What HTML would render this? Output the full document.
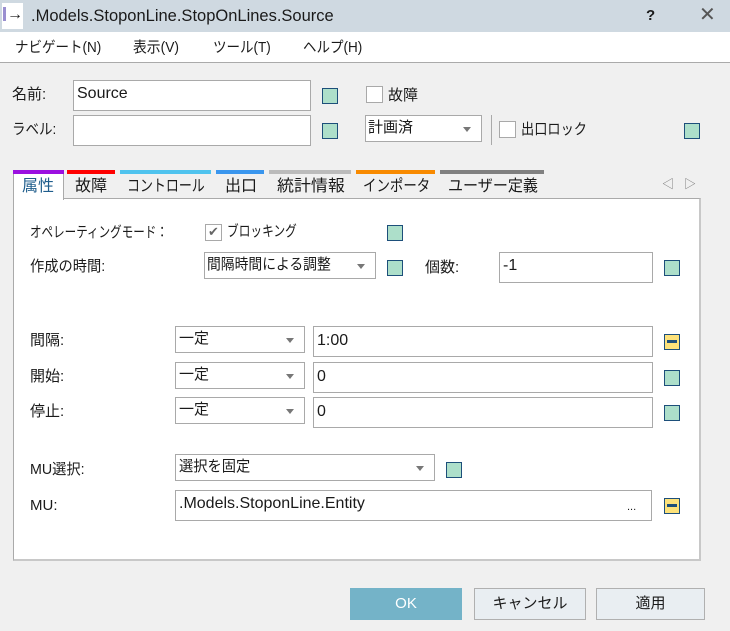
<!DOCTYPE html>
<html><head><meta charset="utf-8"><style>
*{box-sizing:border-box;margin:0;padding:0}
body{width:730px;height:631px;background:#f0f0f0;position:relative;overflow:hidden;font-family:"Liberation Sans","Noto Sans CJK JP",sans-serif;font-size:15px;color:#1a1a1a}
.a{position:absolute;white-space:nowrap}
.t{position:absolute;white-space:nowrap;line-height:20px;transform-origin:left center}
.in{position:absolute;background:#fff;border:1px solid #a9a9a9}
.sq{position:absolute;width:16px;height:16px;background:#addfca;border:1.5px solid #1d4f7a}
.ye{position:absolute;width:16px;height:16px;background:#fde27a;border:1.5px solid #1d4f7a}
.ye:after{content:"";position:absolute;left:2px;right:2px;top:5px;height:3px;background:#1d4f7a}
.cb{position:absolute;width:17px;height:17px;background:#fff;border:1px solid #a9a9a9}
.dd:after{content:"";position:absolute;right:10px;top:11px;border:4px solid transparent;border-top:5px solid #777}
.bar{position:absolute;top:170px;height:4px}
.tab{position:absolute;top:176px;line-height:22px;font-size:16px;white-space:nowrap;transform-origin:left center}
.btn{position:absolute;top:588px;height:32px;border:1px solid #b0b0b0;background:#e9eef2;text-align:center;line-height:30px;font-size:15px}
.L{font-size:16px}
</style></head><body>
<div class="a" style="left:0;top:0;width:730px;height:32px;background:#cfd9e1"></div>
<div class="a" style="left:2px;top:3px;width:21px;height:26px;background:#fff"></div>
<div class="a" style="left:3px;top:7px;width:3px;height:14px;background:#9a8fd0"></div>
<div class="t" style="left:7px;top:5px;font-size:16px;font-weight:bold">→</div>
<div class="t" style="left:31px;top:5px;font-size:16.5px;line-height:22px">.Models.StoponLine.StopOnLines.Source</div>
<div class="t" style="left:646px;top:6px;font-weight:bold;font-size:15px">?</div>
<div class="t" style="left:699px;top:5px;font-size:20px;color:#555">✕</div>
<div class="a" style="left:0;top:32px;width:730px;height:31px;background:#fff;border-bottom:1px solid #aaa"></div>
<div class="t" style="left:15px;top:38px;transform:scaleX(.9)">ナビゲート(N)</div>
<div class="t" style="left:133px;top:38px;transform:scaleX(.92)">表示(V)</div>
<div class="t" style="left:213px;top:38px;transform:scaleX(.9)">ツール(T)</div>
<div class="t" style="left:303px;top:38px;transform:scaleX(.9)">ヘルプ(H)</div>

<div class="t" style="left:12px;top:85px">名前:</div>
<div class="in" style="left:73px;top:80px;width:238px;height:31px"></div>
<div class="t L" style="left:77px;top:84px">Source</div>
<div class="sq" style="left:322px;top:88px"></div>
<div class="cb" style="left:366px;top:86px"></div>
<div class="t" style="left:388px;top:86px">故障</div>
<div class="t" style="left:12px;top:120px;transform:scaleX(.9)">ラベル:</div>
<div class="in" style="left:73px;top:115px;width:238px;height:31px"></div>
<div class="sq" style="left:322px;top:123px"></div>
<div class="in dd" style="left:365px;top:115px;width:117px;height:27px"></div>
<div class="t" style="left:368px;top:118px">計画済</div>
<div class="a" style="left:491px;top:115px;width:1px;height:30px;background:#aaa"></div>
<div class="cb" style="left:499px;top:121px"></div>
<div class="t" style="left:521px;top:120px;transform:scaleX(.88)">出口ロック</div>
<div class="sq" style="left:684px;top:123px"></div>

<div class="a" style="left:13px;top:198px;width:688px;height:363px;background:#fff;border:1px solid #aaa;border-right:2px solid #c8c8c8;border-bottom:2px solid #c8c8c8"></div>
<div class="a" style="left:13px;top:172px;width:51px;height:28px;background:#fff;border:1px solid #aaa;border-bottom:none"></div>
<div class="bar" style="left:13px;width:51px;background:#9b10e0"></div>
<div class="bar" style="left:67px;width:48px;background:#f00"></div>
<div class="bar" style="left:120px;width:91px;background:#4fc3ee"></div>
<div class="bar" style="left:216px;width:48px;background:#3a96ee"></div>
<div class="bar" style="left:269px;width:82px;background:#bbb"></div>
<div class="bar" style="left:356px;width:79px;background:#f88a00"></div>
<div class="bar" style="left:440px;width:104px;background:#808080"></div>
<div class="tab" style="left:22px;color:#1f5d8c">属性</div>
<div class="tab" style="left:75px">故障</div>
<div class="tab" style="left:127px;transform:scaleX(.81)">コントロール</div>
<div class="tab" style="left:225px">出口</div>
<div class="tab" style="left:277px;transform:scaleX(1.06)">統計情報</div>
<div class="tab" style="left:363px;transform:scaleX(.84)">インポータ</div>
<div class="tab" style="left:448px;transform:scaleX(.94)">ユーザー定義</div>
<div class="t" style="left:662px;top:174px;color:#777;font-size:12px">◁</div>
<div class="t" style="left:684px;top:174px;color:#777;font-size:12px">▷</div>

<div class="t" style="left:30px;top:223px;transform:scaleX(.77)">オペレーティングモード：</div>
<div class="cb" style="left:205px;top:224px"></div>
<div class="t" style="left:208px;top:222px;color:#666;font-size:13px">✔</div>
<div class="t" style="left:227px;top:222px;transform:scaleX(.78)">ブロッキング</div>
<div class="sq" style="left:387px;top:225px"></div>
<div class="t" style="left:30px;top:257px;transform:scaleX(.95)">作成の時間:</div>
<div class="in dd" style="left:204px;top:252px;width:172px;height:27px"></div>
<div class="t" style="left:207px;top:255px;transform:scaleX(.92)">間隔時間による調整</div>
<div class="sq" style="left:387px;top:260px"></div>
<div class="t" style="left:425px;top:258px">個数:</div>
<div class="in" style="left:499px;top:252px;width:154px;height:31px"></div>
<div class="t L" style="left:503px;top:256px">-1</div>
<div class="sq" style="left:664px;top:260px"></div>

<div class="t" style="left:30px;top:331px">間隔:</div>
<div class="in dd" style="left:175px;top:326px;width:130px;height:27px"></div>
<div class="t" style="left:179px;top:329px">一定</div>
<div class="in" style="left:313px;top:326px;width:340px;height:31px"></div>
<div class="t L" style="left:317px;top:331px">1:00</div>
<div class="ye" style="left:664px;top:334px"></div>
<div class="t" style="left:30px;top:367px">開始:</div>
<div class="in dd" style="left:175px;top:362px;width:130px;height:27px"></div>
<div class="t" style="left:179px;top:365px">一定</div>
<div class="in" style="left:313px;top:362px;width:340px;height:31px"></div>
<div class="t L" style="left:317px;top:367px">0</div>
<div class="sq" style="left:664px;top:370px"></div>
<div class="t" style="left:30px;top:402px">停止:</div>
<div class="in dd" style="left:175px;top:397px;width:130px;height:27px"></div>
<div class="t" style="left:179px;top:400px">一定</div>
<div class="in" style="left:313px;top:397px;width:340px;height:31px"></div>
<div class="t L" style="left:317px;top:402px">0</div>
<div class="sq" style="left:664px;top:405px"></div>

<div class="t" style="left:30px;top:460px;transform:scaleX(.95)">MU選択:</div>
<div class="in dd" style="left:175px;top:454px;width:260px;height:27px"></div>
<div class="t" style="left:179px;top:457px;transform:scaleX(.95)">選択を固定</div>
<div class="sq" style="left:446px;top:462px"></div>
<div class="t" style="left:30px;top:496px">MU:</div>
<div class="in" style="left:175px;top:490px;width:477px;height:31px"></div>
<div class="t L" style="left:179px;top:494px">.Models.StoponLine.Entity</div>
<div class="t" style="left:627px;top:497px;font-size:11px">...</div>
<div class="ye" style="left:664px;top:498px"></div>

<div class="btn" style="left:350px;width:112px;background:#74b3c8;border-color:#74b3c8;color:#fff">OK</div>
<div class="btn" style="left:474px;width:112px">キャンセル</div>
<div class="btn" style="left:596px;width:109px">適用</div>
</body></html>
